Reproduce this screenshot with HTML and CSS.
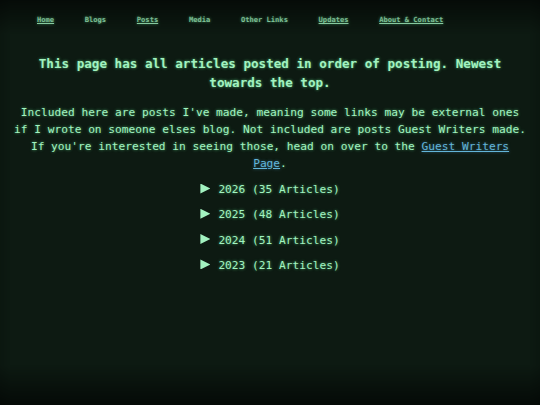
FILE: index.html
```html
<!DOCTYPE html>
<html lang="en">
<head>
<meta charset="utf-8">
<title>Posts</title>
<link rel="stylesheet" href="styles.css">
</head>
<body>
<div class="vignette"></div>
<nav class="nav">
  <a class="nav-link linked" href="#">Home</a>
  <span class="nav-link">Blogs</span>
  <a class="nav-link linked" href="#">Posts</a>
  <span class="nav-link">Media</span>
  <span class="nav-link">Other Links</span>
  <a class="nav-link linked" href="#">Updates</a>
  <a class="nav-link linked" href="#">About &amp; Contact</a>
</nav>
<main class="content">
  <h1 class="title">This page has all articles posted in order of posting. Newest towards the top.</h1>
  <p class="intro">Included here are posts I've made, meaning some links may be external ones if I wrote on someone elses blog. Not included are posts Guest Writers made. If you're interested in seeing those, head on over to the <a class="blue-link" href="#">Guest Writers Page</a>.</p>
  <div class="years">
    <details class="year"><summary class="year-sum">2026 (35 Articles)</summary></details>
    <details class="year"><summary class="year-sum">2025 (48 Articles)</summary></details>
    <details class="year"><summary class="year-sum">2024 (51 Articles)</summary></details>
    <details class="year"><summary class="year-sum">2023 (21 Articles)</summary></details>
  </div>
</main>
</body>
</html>
```
FILE: styles.css
```css
html, body {
  margin: 0;
  padding: 0;
  height: 100%;
}
body {
  background: #0d1a12;
  color: #a2f2c0;
  font-family: "DejaVu Sans Mono", "Liberation Mono", monospace;
  text-shadow: 0 0 3px rgba(110, 255, 160, 0.65);
  overflow: hidden;
}
.vignette {
  position: fixed;
  inset: 0;
  pointer-events: none;
  background:
    linear-gradient(to bottom, rgba(0,0,0,0.55) 0px, rgba(0,0,0,0) 34px),
    linear-gradient(to top, rgba(0,0,0,0.6) 0px, rgba(0,0,0,0) 40px),
    linear-gradient(to right, rgba(0,0,0,0.12) 0px, rgba(0,0,0,0) 10px),
    linear-gradient(to left, rgba(0,0,0,0.12) 0px, rgba(0,0,0,0) 10px);
}
.nav {
  display: flex;
  gap: 30.7px;
  padding: 14px 0 0 37px;
  height: 12px;
  font-size: 7.1px;
  font-weight: bold;
  line-height: 12px;
}
.nav-link {
  color: #a2f2c0;
  text-decoration: none;
}
.nav-link.linked {
  text-decoration: underline;
}
.content {
  display: flex;
  flex-direction: column;
  align-items: center;
  text-align: center;
}
.title {
  width: 500px;
  margin: 28px 0 0;
  font-size: 12.6px;
  line-height: 19px;
  font-weight: bold;
}
.intro {
  width: 515px;
  margin: 12px 0 0;
  font-size: 11.2px;
  line-height: 17px;
}
.blue-link {
  color: #62b4d8;
  text-shadow: 0 0 3px rgba(90, 180, 230, 0.5);
}
.years {
  margin-top: 5px;
  align-self: stretch;
}
.year-sum {
  list-style: none;
  display: block;
  font-size: 11.2px;
  line-height: 25.3px;
  cursor: pointer;
}
.year-sum::-webkit-details-marker {
  display: none;
}
.year-sum::before {
  content: "";
  display: inline-block;
  width: 10px;
  height: 10px;
  margin-right: 8px;
  background: #a2f2c0;
  clip-path: polygon(0 0, 100% 50%, 0 100%);
  vertical-align: -0.5px;
  filter: drop-shadow(0 0 2px rgba(110,255,160,0.5));
}
```
